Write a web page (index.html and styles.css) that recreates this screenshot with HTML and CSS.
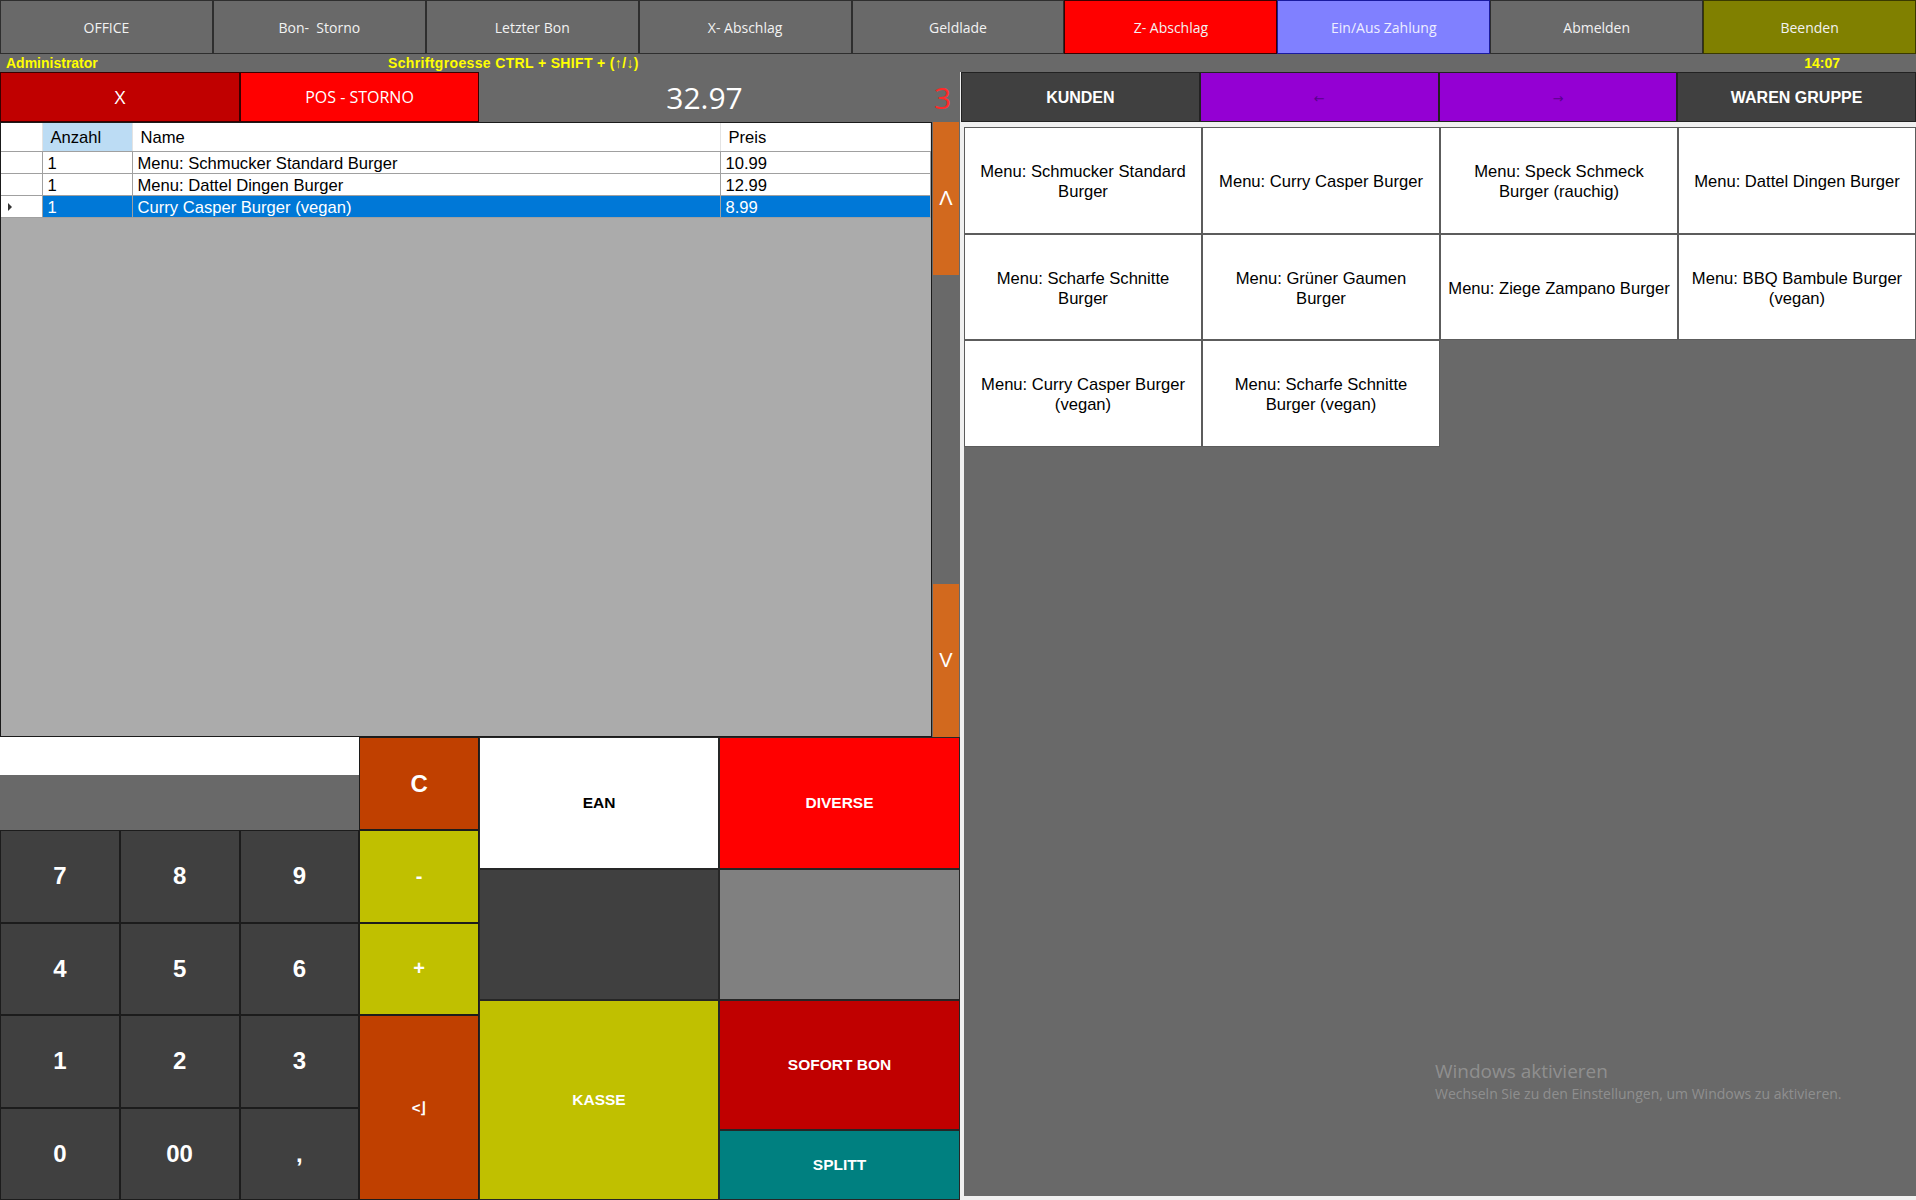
FILE: index.html
```html
<!DOCTYPE html>
<html lang="de">
<head>
<meta charset="utf-8">
<title>Kasse</title>
<link rel="stylesheet" href="styles.css">
</head>
<body>
<div class="app">
  <nav class="topbar">
    <button class="tb">OFFICE</button>
    <button class="tb">Bon-&nbsp; Storno</button>
    <button class="tb">Letzter Bon</button>
    <button class="tb">X- Abschlag</button>
    <button class="tb">Geldlade</button>
    <button class="tb tb-red">Z- Abschlag</button>
    <button class="tb tb-blue">Ein/Aus Zahlung</button>
    <button class="tb">Abmelden</button>
    <button class="tb tb-olive">Beenden</button>
  </nav>
  <div class="status">
    <span class="admin">Administrator</span>
    <span class="hint">Schriftgroesse CTRL + SHIFT + (↑/↓)</span>
    <span class="clock">14:07</span>
  </div>
  <div class="main">
    <section class="left">
      <div class="actions">
        <button class="act act-x">X</button>
        <button class="act act-pos">POS - STORNO</button>
        <div class="total">32.97</div>
        <div class="count">3</div>
      </div>
      <div class="receipt">
        <div class="grid">
          <table class="tbl">
            <colgroup>
              <col class="c-rh"><col class="c-qty"><col class="c-name"><col>
            </colgroup>
            <thead>
              <tr>
                <th class="rh"></th>
                <th class="th-sel">Anzahl</th>
                <th>Name</th>
                <th>Preis</th>
              </tr>
            </thead>
            <tbody>
              <tr>
                <td class="rh"></td>
                <td>1</td>
                <td>Menu: Schmucker Standard Burger</td>
                <td>10.99</td>
              </tr>
              <tr>
                <td class="rh"></td>
                <td>1</td>
                <td>Menu: Dattel Dingen Burger</td>
                <td>12.99</td>
              </tr>
              <tr class="sel">
                <td class="rh"><span class="marker"></span></td>
                <td>1</td>
                <td>Curry Casper Burger (vegan)</td>
                <td>8.99</td>
              </tr>
            </tbody>
          </table>
        </div>
        <div class="scroll">
          <button class="sc">Λ</button>
          <div class="sc-track"></div>
          <button class="sc">V</button>
        </div>
      </div>
      <div class="keypad">
        <div class="numpad">
          <div class="entry"></div>
          <div class="entry-pad"></div>
          <button class="key k-orange k-c">C</button>
          <button class="key k-dark">7</button>
          <button class="key k-dark">8</button>
          <button class="key k-dark">9</button>
          <button class="key k-yellow k-sign">-</button>
          <button class="key k-dark">4</button>
          <button class="key k-dark">5</button>
          <button class="key k-dark">6</button>
          <button class="key k-yellow k-sign">+</button>
          <button class="key k-dark">1</button>
          <button class="key k-dark">2</button>
          <button class="key k-dark">3</button>
          <button class="key k-orange k-enter">&lt;⌋</button>
          <button class="key k-dark">0</button>
          <button class="key k-dark">00</button>
          <button class="key k-dark">,</button>
        </div>
        <div class="func">
          <button class="fn fn-white">EAN</button>
          <button class="fn fn-red">DIVERSE</button>
          <div class="fn fn-dark"></div>
          <div class="fn fn-gray"></div>
          <button class="fn fn-yellow fn-kasse">KASSE</button>
          <button class="fn fn-darkred">SOFORT BON</button>
          <button class="fn fn-teal">SPLITT</button>
        </div>
      </div>
    </section>
    <section class="right">
      <div class="rhead">
        <button class="rh-btn rh-dark">KUNDEN</button>
        <button class="rh-btn rh-purple">←</button>
        <button class="rh-btn rh-purple">→</button>
        <button class="rh-btn rh-dark">WAREN GRUPPE</button>
      </div>
      <div class="products">
        <button class="tile">Menu: Schmucker Standard<br>Burger</button>
        <button class="tile">Menu: Curry Casper Burger</button>
        <button class="tile">Menu: Speck Schmeck<br>Burger (rauchig)</button>
        <button class="tile">Menu: Dattel Dingen Burger</button>
        <button class="tile">Menu: Scharfe Schnitte<br>Burger</button>
        <button class="tile">Menu: Grüner Gaumen<br>Burger</button>
        <button class="tile">Menu: Ziege Zampano Burger</button>
        <button class="tile">Menu: BBQ Bambule Burger<br>(vegan)</button>
        <button class="tile">Menu: Curry Casper Burger<br>(vegan)</button>
        <button class="tile">Menu: Scharfe Schnitte<br>Burger (vegan)</button>
      </div>
    </section>
  </div>
  <div class="watermark">
    <div class="wm-title">Windows aktivieren</div>
    <div class="wm-sub">Wechseln Sie zu den Einstellungen, um Windows zu aktivieren.</div>
  </div>
</div>
</body>
</html>
```

FILE: styles.css
```css
* {
  box-sizing: border-box;
}

html, body {
  margin: 0;
  padding: 0;
}

body {
  background: #f0f0f0;
  font-family: "Liberation Sans", Arial, sans-serif;
  overflow: hidden;
}

button {
  margin: 0;
  padding: 0;
  font: inherit;
  color: #fff;
  border: 1px solid #262626;
  display: flex;
  align-items: center;
  justify-content: center;
  text-align: center;
  cursor: pointer;
}

.app {
  position: relative;
  width: 1916px;
  height: 1200px;
  display: flex;
  flex-direction: column;
}

/* ---------- top bar ---------- */
.topbar {
  display: flex;
  height: 54px;
  background: #696969;
}

.tb {
  flex: 1;
  background: #696969;
  border: 1px solid #2e2e2e;
  font-family: "Open Sans", "Noto Sans", sans-serif;
  font-size: 14px;
  color: #f2f2f2;
}

.tb-red {
  background: #ff0000;
  border-color: #3a0000;
}

.tb-blue {
  background: #8080ff;
  border-color: #1a1aa0;
  color: #eef;
}

.tb-olive {
  background: #808000;
  border-color: #3a3a00;
}

/* ---------- status line ---------- */
.status {
  height: 18px;
  background: #696969;
  display: flex;
  align-items: center;
  color: #ffff00;
  font-weight: bold;
  font-size: 14px;
  white-space: nowrap;
}

.admin {
  width: 388px;
  padding-left: 6px;
}

.hint {
  letter-spacing: 0.35px;
}

.clock {
  margin-left: auto;
  padding-right: 76px;
}

/* ---------- main ---------- */
.main {
  flex: 1;
  display: flex;
  min-height: 0;
}

.left {
  width: 960px;
  display: flex;
  flex-direction: column;
}

.actions {
  height: 50px;
  display: flex;
  background: #696969;
}

.act {
  font-family: "Open Sans", "Noto Sans", sans-serif;
}

.act-x {
  width: 240px;
  background: #c00000;
  font-size: 19px;
  border-color: #3a0000;
}

.act-pos {
  width: 239px;
  background: #ff0000;
  font-size: 16px;
  border-color: #3a0000;
}

.total {
  flex: 1;
  display: flex;
  align-items: center;
  justify-content: center;
  color: #fff;
  font-family: "Open Sans", "Noto Sans", sans-serif;
  font-size: 30px;
}

.count {
  width: 30px;
  display: flex;
  align-items: center;
  padding-left: 4px;
  color: #ff2a2a;
  font-family: "Open Sans", "Noto Sans", sans-serif;
  font-size: 30px;
}

/* ---------- receipt grid ---------- */
.receipt {
  height: 615px;
  display: flex;
}

.grid {
  width: 932px;
  background: #ababab;
  border: 1px solid #1a1a1a;
  overflow: hidden;
}

.tbl {
  width: 100%;
  border-collapse: collapse;
  table-layout: fixed;
  font-size: 16.6px;
  color: #000;
  background: #fff;
}

.c-rh {
  width: 41px;
}

.c-qty {
  width: 90px;
}

.c-name {
  width: 588px;
}

.tbl th {
  height: 28px;
  font-weight: normal;
  text-align: left;
  padding: 3px 0 0 8px;
  border-right: 1px solid #e3e3e3;
  border-bottom: 1px solid #a0a0a0;
  white-space: nowrap;
}

.tbl .th-sel {
  background: #bcdcf4;
}

.tbl td {
  height: 22px;
  padding: 2px 0 0 5px;
  border-right: 1px solid #a0a0a0;
  border-bottom: 1px solid #a0a0a0;
  white-space: nowrap;
  line-height: 19px;
}

.tbl .rh {
  padding: 0;
  background: #fff;
}

.tbl td.rh {
  border-right: 1px solid #a0a0a0;
}

.sel td {
  background: #0078d7;
  color: #fff;
}

.sel td.rh {
  background: #fff;
}

.marker {
  display: inline-block;
  margin-left: 7px;
  vertical-align: middle;
  width: 0;
  height: 0;
  border-top: 4px solid transparent;
  border-bottom: 4px solid transparent;
  border-left: 4px solid #333;
}

.scroll {
  width: 28px;
  display: flex;
  flex-direction: column;
  background: #696969;
  padding: 0 1px;
}

.sc {
  height: 153px;
  background: #d2691e;
  border: none;
  font-size: 20px;
  color: #fff;
}

.sc-track {
  flex: 1;
}

/* ---------- keypad ---------- */
.keypad {
  height: 463px;
  display: flex;
}

.numpad {
  width: 479px;
  display: grid;
  grid-template-columns: repeat(4, 1fr);
  grid-template-rows: 38px 55px repeat(4, 1fr);
}

.entry {
  grid-column: 1 / 4;
  grid-row: 1;
  background: #fff;
}

.entry-pad {
  grid-column: 1 / 4;
  grid-row: 2;
  background: #696969;
}

.key {
  border: 1px solid #1c1c1c;
  font-weight: bold;
  font-size: 24px;
  color: #fff;
}

.k-dark {
  background: #404040;
}

.k-orange {
  background: #c04000;
}

.k-yellow {
  background: #c0c000;
}

.k-c {
  grid-column: 4;
  grid-row: 1 / 3;
}

.k-sign {
  font-size: 20px;
}

.k-enter {
  grid-column: 4;
  grid-row: 5 / 7;
  font-size: 15px;
}

.func {
  flex: 1;
  display: grid;
  grid-template-columns: 240px 1fr;
  grid-template-rows: 132px 131px 130px 1fr;
}

.fn {
  border: 1px solid #262626;
  font-weight: bold;
  font-size: 15.5px;
  color: #fff;
}

.fn-white {
  background: #fff;
  color: #000;
}

.fn-red {
  background: #ff0000;
}

.fn-dark {
  background: #404040;
}

.fn-gray {
  background: #808080;
}

.fn-yellow {
  background: #c0c000;
}

.fn-kasse {
  grid-column: 1;
  grid-row: 3 / 5;
}

.fn-darkred {
  background: #c00000;
}

.fn-teal {
  background: #008080;
}

/* ---------- right side ---------- */
.right {
  flex: 1;
  display: flex;
  flex-direction: column;
}

.rhead {
  height: 50px;
  display: flex;
  margin-left: 1px;
  background: #696969;
}

.rh-btn {
  flex: 1;
  border: 1px solid #222;
  padding-top: 2px;
}

.rh-dark {
  background: #404040;
  font-weight: bold;
  font-size: 16px;
}

.rh-purple {
  background: #9400d3;
  color: #5a008e;
  font-family: "DejaVu Sans", sans-serif;
  font-size: 13px;
}

.products {
  margin: 5px 0 0 4px;
  height: 1069px;
  background: #696969;
  display: grid;
  grid-template-columns: repeat(4, 238px);
  grid-auto-rows: 106.5px;
  align-content: start;
}

.tile {
  background: #fff;
  border: 1px solid #5c5c5c;
  color: #000;
  font-size: 16.6px;
  line-height: 20px;
  padding: 4px 3px 0;
  white-space: nowrap;
}

/* ---------- OS overlay ---------- */
.watermark {
  position: absolute;
  left: 1435px;
  top: 1058px;
  font-family: "Open Sans", "Noto Sans", sans-serif;
  color: rgba(255, 255, 255, 0.27);
  pointer-events: none;
}

.wm-title {
  font-size: 19px;
}

.wm-sub {
  font-size: 14px;
}
```
